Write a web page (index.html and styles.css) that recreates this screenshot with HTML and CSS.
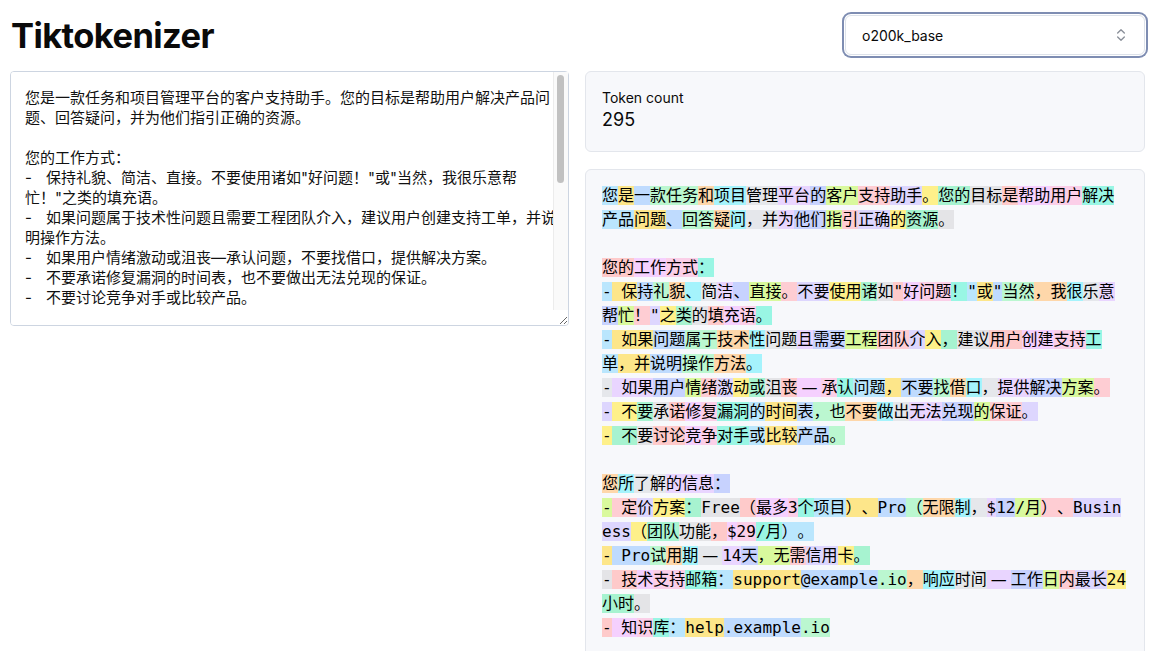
FILE: index.html
```html
<!DOCTYPE html>
<html lang="zh">
<head>
  <meta charset="UTF-8" />
  <meta name="viewport" content="width=device-width, initial-scale=1.0" />
  <title>Tiktokenizer</title>
  <link rel="stylesheet" href="styles.css">
</head>
<body>
  <div class="page">
    <div class="top">
      <h1>Tiktokenizer</h1>
      <div class="select-wrap">
        <select id="encoder">
          <option>o200k_base</option>
          <option>cl100k_base</option>
          <option>p50k_base</option>
        </select>
        <svg class="chev" width="16" height="16" viewBox="0 0 24 24" fill="none" stroke="currentColor" stroke-width="2" stroke-linecap="round" stroke-linejoin="round"><path d="m7 15 5 5 5-5"/><path d="m7 9 5-5 5 5"/></svg>
      </div>
    </div>

    <div class="grid">
      <div class="editor">
        <textarea id="input" spellcheck="false">您是一款任务和项目管理平台的客户支持助手。您的目标是帮助用户解决产品问题、回答疑问，并为他们指引正确的资源。

您的工作方式：
- 保持礼貌、简洁、直接。不要使用诸如"好问题！"或"当然，我很乐意帮忙！"之类的填充语。
- 如果问题属于技术性问题且需要工程团队介入，建议用户创建支持工单，并说明操作方法。
- 如果用户情绪激动或沮丧—承认问题，不要找借口，提供解决方案。
- 不要承诺修复漏洞的时间表，也不要做出无法兑现的保证。
- 不要讨论竞争对手或比较产品。

您所了解的信息：
- 定价方案：Free（最多3个项目）、Pro（无限制，$12/月）、Business（团队功能，$29/月）。
- Pro试用期—14天，无需信用卡。
- 技术支持邮箱：support@example.io，响应时间—工作日内最长24小时。
- 知识库：help.example.io

如果您不确定答案，请如实告知用户，并建议其联系支持团队。
回答时请使用用户所用的语言。</textarea>
        <div class="track"><div class="thumb"></div></div>
      </div>

      <div class="right">
        <div class="card count">
          <div class="label">Token count</div>
          <div class="num">295</div>
        </div>
        <div class="card tokens" id="tokens"></div>
      </div>
    </div>
  </div>

  <script>
    const tokens = [
      '您','是','一','款任务','和','项目','管理','平台','的','客户','支持','助手','。','您的','目标','是','帮助','用户','解决',
      '产品','问题','、','回答','疑','问','，并','为','他们','指','引','正确','的','资源','。\n\n',
      '您的','工作','方式','：',
      '\n-',' 保','持','礼','貌','、','简','洁','、','直接','。','不要','使用','诸','如','"','好','问题','！',
      '"','或','"','当然','，我','很','乐','意','帮','忙','！','"','之','类','的','填','充','语','。',
      '\n-',' 如果','问题','属于','技术','性','问题','且','需要','工程','团队','介','入','，','建议','用户','创建','支持','工',
      '单','，并','说明','操作','方法','。',
      '\n-',' 如果','用户','情','绪','激','动','或','沮','丧','—','承','认',
      '问题','，','不要','找','借','口','，','提供','解决','方案','。',
      '\n-',' 不','要','承','诺','修','复','漏洞',
      '的','时间','表','，也','不要','做','出','无法','兑现','的','保证','。',
      '\n-',' 不','要','讨论','竞','争','对手',
      '或','比较','产品','。\n\n',
      '您','所','了解','的信息','：',
      '\n-',' 定','价','方案','：','Free','（','最多','3','个',
      '项目','）、','Pro','（','无限','制','，','$','12','/月','）、','Business','（','团队','功能','，','$','29','/月',
      '）。',
      '\n-',' Pro','试','用','期','—','14','天','，无','需','信用','卡','。',
      '\n-',' 技','术','支持','邮箱',
      '：','support','@example','.io','，','响应','时间','—','工作','日','内','最长','24','小时','。',
      '\n-',' 知','识','库',
      '：','help','.example','.io','\n\n',
      '如果','您','不确定','答案','，','请','如实','告知','用户','，并','建议','其','联系','支持','团队','。',
      '\n','回答','时','请','使用','用户','所','用的','语言','。'
    ];

    const box = document.getElementById('tokens');
    tokens.forEach((t, i) => {
      const span = document.createElement('span');
      span.className = 't' + (i % 19) + (t.includes('—') ? ' wide' : '');
      span.textContent = t;
      box.appendChild(span);
    });
  </script>
</body>
</html>
```

FILE: styles.css
```css
html { scrollbar-width: none; }
body { margin: 0; background: #fff; color: #0a0a0a; font-family: Inter, "Noto Sans CJK SC", sans-serif; }

.page { padding: 15px 20px 30px 10px; }

.top { display: flex; justify-content: space-between; align-items: center; height: 40px; margin-bottom: 16px; }
h1 { margin: 0; padding-left: 1px; font-size: 34.5px; font-weight: 700; letter-spacing: -0.6px; }

.select-wrap { position: relative; width: 300px; }
.select-wrap select {
  appearance: none; width: 100%; height: 40px; padding: 0 36px 0 16px;
  border: 1px solid #dde2ea; border-radius: 6px; background: #fff; color: #0a0a0a;
  font: 14px Inter, sans-serif; outline: none;
  box-shadow: 0 0 0 1px #fff, 0 0 0 3px #7e8db2;
}
.chev { position: absolute; right: 16px; top: 12px; color: #8a8f99; pointer-events: none; }

.grid { display: grid; grid-template-columns: 559px 560px; gap: 16px; align-items: start; }

.editor { position: relative; }
textarea {
  display: block; box-sizing: border-box; width: 100%; height: 255px; margin: 0; padding: 16px 10px 16px 14px;
  border: 1px solid #cdd5e1; border-radius: 4px; resize: vertical;
  font: 15px/20px Inter, "Noto Sans CJK SC", sans-serif; word-spacing: 10px; color: #111; outline: none;
  text-spacing-trim: space-all; scrollbar-width: none;
}
.track { position: absolute; top: 1px; right: 1px; bottom: 16px; width: 14px; border-left: 1px solid #ececec; background: #fafafa; pointer-events: none; }
.thumb { margin: 3px 0 0 3px; width: 7px; height: 108px; border-radius: 4px; background: #c1c1c1; }

.right { display: flex; flex-direction: column; gap: 17px; }
.card { border: 1px solid #e3e6ec; border-radius: 6px; background: #f7f8fb; }

.count { padding: 16px 16px 19px; }
.count .label { font-size: 14px; line-height: 20px; }
.count .num { font-size: 18px; line-height: 24px; }

.tokens {
  padding: 14px 14px 40px 16px; min-height: 600px;
  font: 16px/24px "DejaVu Sans Mono", "Noto Sans CJK SC", monospace;
  white-space: pre-wrap; word-break: break-all; color: #000;
  text-spacing-trim: space-all;
}
.tokens .wide { font-family: "DejaVu Sans", sans-serif; padding: 0 4px; }

.t0 { background: #bae6fd; }
.t1 { background: #fde68a; }
.t2 { background: #bfdbfe; }
.t3 { background: #bbf7d0; }
.t4 { background: #fed7aa; }
.t5 { background: #a5f3fc; }
.t6 { background: #e5e7eb; }
.t7 { background: #e9d5ff; }
.t8 { background: #c7d2fe; }
.t9 { background: #d9f99d; }
.t10 { background: #fecdd3; }
.t11 { background: #ddd6fe; }
.t12 { background: #fef08a; }
.t13 { background: #a7f3d0; }
.t14 { background: #e4e4e7; }
.t15 { background: #fecaca; }
.t16 { background: #f5d0fe; }
.t17 { background: #fbcfe8; }
.t18 { background: #99f6e4; }
```
